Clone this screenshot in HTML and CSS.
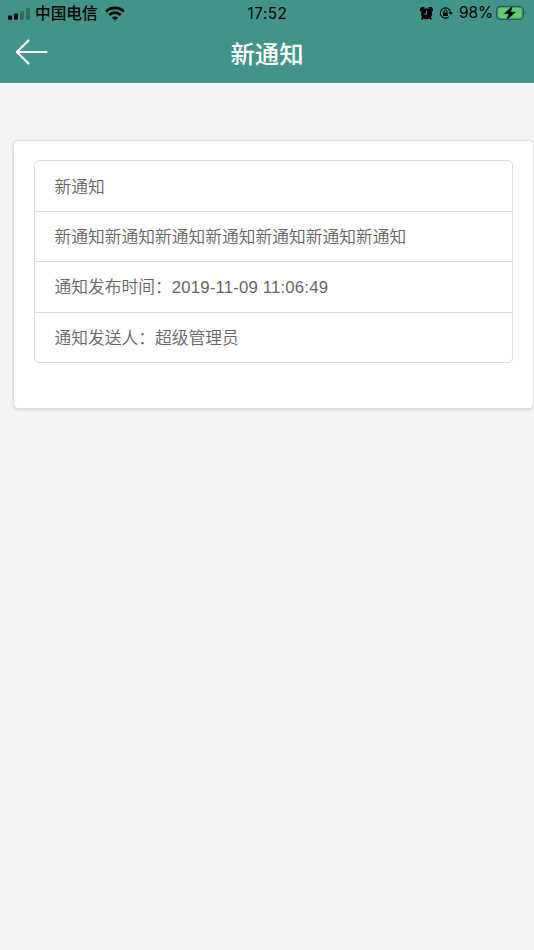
FILE: index.html
```html
<!DOCTYPE html>
<html lang="zh-CN">
<head>
<meta charset="utf-8">
<title>新通知</title>
<link rel="stylesheet" href="styles.css">
</head>
<body>
<header class="header">
  <div class="status">
    <div class="status-left">
      <svg class="signal" width="23" height="12" viewBox="0 0 23 12"><rect x="0" y="7.5" width="4" height="4.3" rx="1"/><rect x="6" y="5.5" width="4" height="6.3" rx="1"/><g opacity=".27"><rect x="12" y="3" width="4" height="8.8" rx="1"/><rect x="18" y="0" width="4" height="11.8" rx="1"/></g></svg>
      <span class="carrier">中国电信</span>
      <svg class="wifi" width="20" height="15" viewBox="0 0 20 15"><g fill="none" stroke="#000" stroke-width="2.8"><path d="M1.1 5.4a12.8 12.8 0 0 1 17.8 0"/><path d="M4.3 9a8.2 8.2 0 0 1 11.4 0"/></g><path d="M10 14.6 7 11.8a4.4 4.4 0 0 1 6 0z"/></svg>
    </div>
    <time class="clock">17:52</time>
    <div class="status-right">
      <svg class="alarm" width="13" height="13" viewBox="0 0 14 14"><path d="M3.3 11.2 2.2 12.8M10.7 11.2l1.1 1.6" stroke="#000" stroke-width="1.9" stroke-linecap="round"/><circle cx="7" cy="7.3" r="6"/><path d="M.7 5A2.8 2.8 0 0 1 5 .9zM13.3 5A2.8 2.8 0 0 0 9 .9z"/><path d="M7 4v3.7H4.4" fill="none" stroke="#429488" stroke-width="1.1"/></svg>
      <svg class="lock" width="14" height="14" viewBox="0 0 15 14"><path d="M12.3 5.6A5.5 5.5 0 1 0 10.6 11.2" fill="none" stroke="#000" stroke-width="1.2"/><path d="M10.2 6h4.6l-2.3 3.2z"/><rect x="4.3" y="6.2" width="5.2" height="3.9" rx=".5"/><path d="M5.4 6.5V5.2a1.5 1.5 0 0 1 3 0v1.3" fill="none" stroke="#000"/></svg>
      <span class="percent">98%</span>
      <svg class="battery" width="31" height="16" viewBox="0 0 31 16"><rect x=".7" y="1.3" width="26.6" height="13.2" rx="3.8" fill="none" stroke="#275e57" stroke-width="1.2"/><rect x="2.2" y="2.8" width="23.2" height="10.2" rx="2.4" fill="#65cb68"/><path d="M28.8 5.8q2.2 2 0 4.2z" fill="#275e57"/><path d="M16.8.7 8.2 8.8h4.6l-2.3 6.5 9.1-8.4h-5z" stroke="#429488" stroke-width="1.1" paint-order="stroke"/></svg>
    </div>
  </div>
  <div class="nav">
    <svg class="back" width="33" height="28" viewBox="0 0 33 28"><path d="M31.5 14H2M13.5 2.4 1.8 14l11.7 11.6" fill="none" stroke="#fff" stroke-width="2.1" stroke-linecap="round" stroke-linejoin="round"/></svg>
    <h1 class="title">新通知</h1>
  </div>
</header>
<main class="card">
  <ul class="list">
    <li class="item">新通知</li>
    <li class="item">新通知新通知新通知新通知新通知新通知新通知</li>
    <li class="item">通知发布时间：<span class="date">2019-11-09 11:06:49</span></li>
    <li class="item">通知发送人：超级管理员</li>
  </ul>
</main>
</body>
</html>
```
FILE: styles.css
```css
* { box-sizing: border-box; }

body {
  margin: 0;
  min-height: 950px;
  background: #f2f4f6;
  color: #666;
  font-family: "Liberation Sans", "Noto Sans CJK SC", sans-serif;
}

svg { display: block; flex: none; }

.header {
  height: 83px;
  background: #429488;
  border-bottom: 1px solid #55988f;
}

.status {
  display: grid;
  grid-template-columns: 1fr auto 1fr;
  grid-template-rows: 26px;
  height: 26px;
  padding: 0 7px 0 8px;
  color: #000;
  font-family: Inter, "Noto Sans CJK SC", sans-serif;
  line-height: 26px;
}

.status-left,
.status-right { display: flex; align-items: center; }
.status-right { justify-content: flex-end; }

.signal { margin-top: 1px; }
.carrier { margin-left: 4px; padding-top: 1px; font-size: 15.7px; font-weight: 500; }
.wifi { margin-left: 7px; }
.clock { font-size: 15.3px; font-weight: 400; line-height: 27px; letter-spacing: .5px; }
.lock { margin-left: 6px; }
.percent { margin-left: 6px; font-size: 15.5px; letter-spacing: -.1px; }
.battery { margin-left: 3px; }

.nav {
  display: grid;
  grid-template-columns: 48px 1fr 48px;
  align-items: center;
  height: 52px;
}

.back { margin-left: 15px; }

.title {
  margin: 5px 0 0;
  color: #fff;
  font-size: 24.4px;
  font-weight: 500;
  line-height: 36px;
  text-align: center;
}

.card {
  height: 269px;
  margin: 57px 0 0 13px;
  padding: 20px;
  background: #fff;
  border: 1px solid #dcdee0;
  border-radius: 5px;
  box-shadow: 0 1px 3px rgba(0, 0, 0, .12);
}

.list {
  width: 479px;
  margin: -1px 0 0;
  padding: 0;
  border: 1px solid #dedede;
  border-radius: 5px;
  list-style: none;
}

.item {
  height: 50.2px;
  padding: 1px 19.4px 0;
  font-size: 16.75px;
  font-weight: 350;
  line-height: 51px;
}

.item + .item { padding-top: 0; border-top: 1px solid #dedede; }

.date { letter-spacing: .18px; }
```
